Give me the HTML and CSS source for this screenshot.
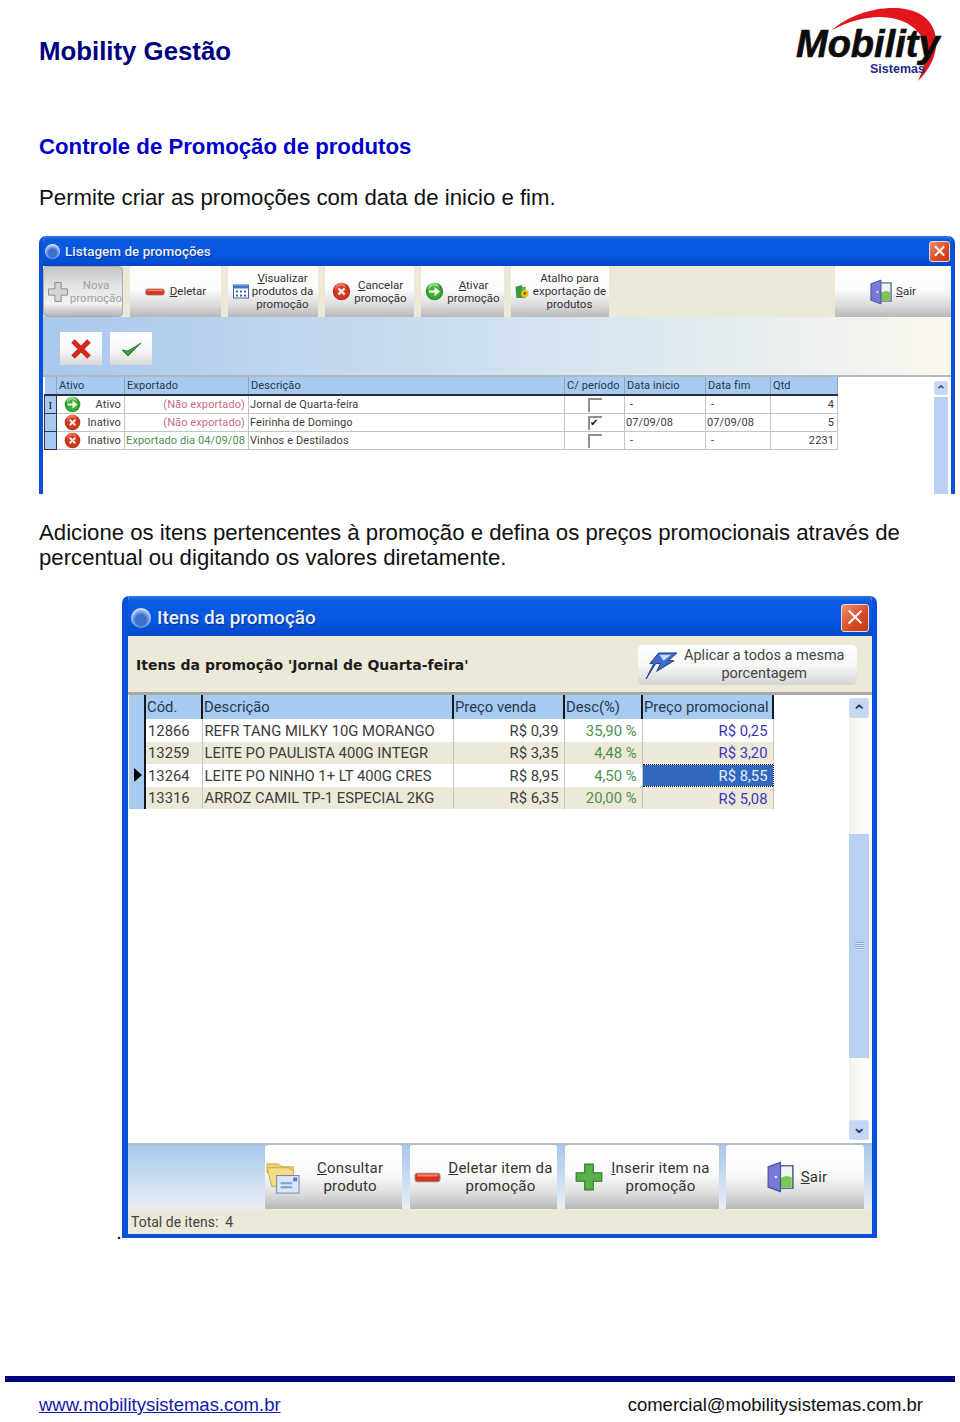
FILE: index.html
```html
<!DOCTYPE html>
<html lang="pt-BR">
<head>
    <meta charset="UTF-8">
    <meta name="viewport" content="width=device-width, initial-scale=1.0">
    <title>Mobility Gestão</title>
    <link rel="stylesheet" href="styles.css">
</head>
<body>
    <!-- ícones usados nas duas janelas -->
    <svg class="icon-defs" aria-hidden="true">
        <symbol id="i-cancel" viewBox="0 0 24 24">
            <circle cx="12" cy="12" r="11" fill="#c9301c"/>
            <circle cx="11" cy="8" r="7" fill="#e8735c"/>
            <circle cx="12" cy="13" r="8" fill="#cf3a22"/>
            <path d="M8 8l8 8M16 8l-8 8" stroke="#f6e4dc" stroke-width="3"/>
        </symbol>
        <symbol id="i-go" viewBox="0 0 24 24">
            <circle cx="12" cy="12" r="11" fill="#2f9a2c"/>
            <circle cx="11" cy="8" r="7" fill="#93dc84"/>
            <circle cx="12" cy="13" r="8" fill="#39ad36"/>
            <path d="M5 10.500h7V6l7 6-7 6v-4.500H5z" fill="#eef8e6"/>
        </symbol>
        <symbol id="i-door" viewBox="0 0 24 28">
            <path d="M10 4h13v20H10z" fill="#eef3f4" stroke="#5a6c94" stroke-width="1.500"/>
            <path d="M11 15l6-2 5 1v9H11z" fill="#78c850"/>
            <path d="M1 5l11-4v26L1 23z" fill="#7878d8" stroke="#4c4c9c"/>
            <circle cx="8" cy="14" r="1.200" fill="#e8e8ff"/>
        </symbol>
        <symbol id="i-plus" viewBox="0 0 28 28">
            <path d="M10 2h8v8h8v8h-8v8h-8v-8H2v-8h8z"/>
        </symbol>
        <symbol id="i-minus" viewBox="0 0 26 10">
            <rect x="1" y="1" width="24" height="8" rx="2.500" fill="#d8321c" stroke="#9c8078"/>
            <rect x="3" y="2" width="20" height="2" fill="#f08470"/>
        </symbol>
    </svg>

    <header class="top">
        <h1 class="brand-title">Mobility Gestão</h1>
        <svg class="logo" viewBox="0 0 150 80" role="img" aria-label="Mobility Sistemas">
            <path d="M40 27C62 7 104-2 128 11c21 12 23 42-2 67 11-24 10-41-4-53C102 8 68 12 40 27z" fill="#e2141c"/>
            <text class="logo-name" x="4" y="54">Mobility</text>
            <text class="logo-sub" x="78" y="70">Sistemas</text>
        </svg>
    </header>

    <main>
        <h2 class="section-title">Controle de Promoção de produtos</h2>
        <p class="intro">Permite criar as promoções com data de inicio e fim.</p>

        <!-- Listagem de promoções -->
        <section class="window window-list">
            <div class="titlebar">
                <span class="title-ball"></span>
                <span class="title-text">Listagem de promoções</span>
                <span class="close-btn"></span>
            </div>
            <div class="toolbar">
                <div class="tool tool-pressed w-nova">
                    <svg class="ic-20 ic-grey"><use href="#i-plus"/></svg>
                    <span class="tool-label">Nova<br>promoção</span>
                </div>
                <div class="tool w-del">
                    <svg class="ic-minus"><use href="#i-minus"/></svg>
                    <span class="tool-label"><u>D</u>eletar</span>
                </div>
                <div class="tool w-vis">
                    <svg class="ic-15" viewBox="0 0 16 14">
                        <rect x=".5" y=".5" width="15" height="13" fill="#fff" stroke="#3c64a8"/>
                        <path d="M1 1h14v3H1z" fill="#3c78c8"/>
                        <path d="M3 6h2v2H3zM7 6h2v2H7zM11 6h2v2h-2zM3 10h2v2H3zM7 10h2v2H7zM11 10h2v2h-2z" fill="#3c64a8"/>
                    </svg>
                    <span class="tool-label"><u>V</u>isualizar<br>produtos da<br>promoção</span>
                </div>
                <div class="tool w-can">
                    <svg class="ic-18"><use href="#i-cancel"/></svg>
                    <span class="tool-label"><u>C</u>ancelar<br>promoção</span>
                </div>
                <div class="tool w-ati">
                    <svg class="ic-18"><use href="#i-go"/></svg>
                    <span class="tool-label"><u>A</u>tivar<br>promoção</span>
                </div>
                <div class="tool w-ata">
                    <svg class="ic-15" viewBox="0 0 16 16">
                        <path d="M1 3l7-2 1 14-7 0z" fill="#3c9a40"/>
                        <path d="M8 3h4v12H8z" fill="#5cb84c"/>
                        <circle cx="11" cy="10" r="4" fill="#e8c020"/>
                        <circle cx="11" cy="10" r="1.500" fill="#805c10"/>
                    </svg>
                    <span class="tool-label">Atalho para<br>exportação de<br>produtos</span>
                </div>
                <div class="tool-space"></div>
                <div class="tool w-sair">
                    <svg class="ic-door"><use href="#i-door"/></svg>
                    <span class="tool-label"><u>S</u>air</span>
                </div>
            </div>
            <div class="filter-bar">
                <div class="square-btn">
                    <svg class="ic-22" viewBox="0 0 24 24"><path d="M4 4l16 16M20 4L4 20" stroke="#d42818" stroke-width="5"/></svg>
                </div>
                <div class="square-btn">
                    <svg class="ic-22" viewBox="0 0 24 24"><path d="M3 13l6 6L22 6 9 14z" fill="#3c9c48" stroke="#2c8038"/></svg>
                </div>
            </div>
            <div class="grid-area">
                <table class="grid grid-small">
                    <colgroup>
                        <col class="c-12"><col class="c-68"><col class="c-124"><col class="c-316">
                        <col class="c-60"><col class="c-81"><col class="c-65"><col class="c-67">
                    </colgroup>
                    <thead>
                        <tr><th></th><th>Ativo</th><th>Exportado</th><th>Descrição</th><th>C/ período</th><th>Data inicio</th><th>Data fim</th><th>Qtd</th></tr>
                    </thead>
                    <tbody>
                        <tr>
                            <td class="ind ind-cursor">I</td>
                            <td><span class="status"><svg class="ic-16"><use href="#i-go"/></svg><span>Ativo</span></span></td>
                            <td class="num txt-red">(Não exportado)</td>
                            <td>Jornal de Quarta-feira</td>
                            <td class="mid"><span class="check"></span></td>
                            <td class="pad-dash">-</td><td class="pad-dash">-</td>
                            <td class="num">4</td>
                        </tr>
                        <tr>
                            <td class="ind"></td>
                            <td><span class="status"><svg class="ic-16"><use href="#i-cancel"/></svg><span>Inativo</span></span></td>
                            <td class="num txt-red">(Não exportado)</td>
                            <td>Feirinha de Domingo</td>
                            <td class="mid"><span class="check checked">✔</span></td>
                            <td>07/09/08</td><td>07/09/08</td>
                            <td class="num">5</td>
                        </tr>
                        <tr>
                            <td class="ind"></td>
                            <td><span class="status"><svg class="ic-16"><use href="#i-cancel"/></svg><span>Inativo</span></span></td>
                            <td class="num txt-green">Exportado dia 04/09/08</td>
                            <td>Vinhos e Destilados</td>
                            <td class="mid"><span class="check"></span></td>
                            <td class="pad-dash">-</td><td class="pad-dash">-</td>
                            <td class="num">2231</td>
                        </tr>
                    </tbody>
                </table>
                <div class="scroll scroll-small">
                    <span class="scroll-btn">⌃</span>
                    <span class="scroll-thumb"></span>
                </div>
            </div>
        </section>

        <p class="intro intro-two">Adicione os itens pertencentes à promoção e defina os preços promocionais através de percentual ou digitando os valores diretamente.</p>

        <div class="window-row">
            <span class="dot">.</span>
            <!-- Itens da promoção -->
            <section class="window window-items">
                <div class="titlebar titlebar-big">
                    <span class="title-ball"></span>
                    <span class="title-text">Itens da promoção</span>
                    <span class="close-btn"></span>
                </div>
                <div class="items-head">
                    <strong class="items-title">Itens da promoção 'Jornal de Quarta-feira'</strong>
                    <div class="apply-btn">
                        <svg class="ic-bolt" viewBox="0 0 34 30">
                            <path d="M14 2h19l-9 8h6L12 21l4-8h-5L1 29 9 13H5z" fill="#3c6cc8" stroke="#1c3c80"/>
                            <path d="M15 4h12l-8 6" fill="#c8dcf8"/>
                        </svg>
                        <span>Aplicar a todos a mesma<br>porcentagem</span>
                    </div>
                </div>
                <div class="grid-area grid-area-big">
                    <table class="grid grid-big">
                        <colgroup>
                            <col class="c-16"><col class="c-57"><col class="c-251">
                            <col class="c-111"><col class="c-78"><col class="c-131">
                        </colgroup>
                        <thead>
                            <tr><th></th><th>Cód.</th><th>Descrição</th><th>Preço venda</th><th>Desc(%)</th><th>Preço promocional</th></tr>
                        </thead>
                        <tbody>
                            <tr>
                                <td class="ind"></td><td>12866</td><td>REFR TANG MILKY 10G MORANGO</td>
                                <td class="num">R$ 0,39</td><td class="num txt-green">35,90 %</td><td class="num txt-blue">R$ 0,25</td>
                            </tr>
                            <tr class="alt">
                                <td class="ind"></td><td>13259</td><td>LEITE PO PAULISTA 400G INTEGR</td>
                                <td class="num">R$ 3,35</td><td class="num txt-green">4,48 %</td><td class="num txt-blue">R$ 3,20</td>
                            </tr>
                            <tr>
                                <td class="ind"><span class="row-arrow"></span></td><td>13264</td><td>LEITE PO NINHO 1+ LT 400G CRES</td>
                                <td class="num">R$ 8,95</td><td class="num txt-green">4,50 %</td><td class="num cell-selected">R$ 8,55</td>
                            </tr>
                            <tr class="alt">
                                <td class="ind"></td><td>13316</td><td>ARROZ CAMIL TP-1 ESPECIAL 2KG</td>
                                <td class="num">R$ 6,35</td><td class="num txt-green">20,00 %</td><td class="num txt-blue">R$ 5,08</td>
                            </tr>
                        </tbody>
                    </table>
                    <div class="scroll scroll-big">
                        <span class="scroll-btn">⌃</span>
                        <span class="scroll-track"></span>
                        <span class="scroll-thumb"><span class="scroll-grip"></span></span>
                        <span class="scroll-track scroll-track-low"></span>
                        <span class="scroll-btn scroll-btn-down">⌄</span>
                    </div>
                </div>
                <div class="bottom-bar">
                    <div class="tool tool-big w-con">
                        <svg class="ic-folder" viewBox="0 0 36 36">
                            <path d="M1 4h12l3 3h12v6H1z" fill="#f0d070" stroke="#c8a840"/>
                            <path d="M1 8h22l6 4-4 15H6z" fill="#f8dc88" stroke="#c8a840"/>
                            <rect x="11" y="16" width="23" height="18" fill="#dce8f8" stroke="#6c84b0"/>
                            <path d="M15 24h12M15 28h12" stroke="#78a0d0" stroke-width="2"/>
                            <rect x="28" y="18" width="4" height="4" fill="#5878b8"/>
                        </svg>
                        <span class="tool-label"><u>C</u>onsultar<br>produto</span>
                    </div>
                    <div class="tool tool-big w-dit">
                        <svg class="ic-minus-big"><use href="#i-minus"/></svg>
                        <span class="tool-label"><u>D</u>eletar item da<br>promoção</span>
                    </div>
                    <div class="tool tool-big w-ins">
                        <svg class="ic-plus-big"><use href="#i-plus"/></svg>
                        <span class="tool-label"><u>I</u>nserir item na<br>promoção</span>
                    </div>
                    <div class="tool tool-big w-sai">
                        <svg class="ic-door-big"><use href="#i-door"/></svg>
                        <span class="tool-label"><u>S</u>air</span>
                    </div>
                </div>
                <div class="status-bar">Total de itens:&nbsp; 4</div>
            </section>
        </div>
    </main>

    <footer class="footer">
        <a class="footer-link" href="#">www.mobilitysistemas.com.br</a>
        <span>comercial@mobilitysistemas.com.br</span>
    </footer>
</body>
</html>
```

FILE: styles.css
```css
* {
    margin: 0;
    padding: 0;
    box-sizing: border-box;
}

body {
    background-color: #fff;
    color: #111;
    font-family: 'Liberation Sans', Arial, sans-serif;
    overflow-x: hidden;
}

.icon-defs {
    position: absolute;
    width: 0;
    height: 0;
}

/* cabeçalho */
.top {
    display: flex;
    justify-content: space-between;
    height: 134px;
    padding: 3px 18px 0 39px;
}

.brand-title {
    margin-top: 33px;
    color: #000080;
    font-size: 25.8px;
    line-height: 30px;
}

.logo {
    width: 150px;
    height: 80px;
}

.logo-name {
    font: italic bold 38px 'Liberation Sans', Arial, sans-serif;
    fill: #0c0c0c;
    stroke: #0c0c0c;
    stroke-width: .6px;
}

.logo-sub {
    font: bold 12.5px 'Liberation Sans', Arial, sans-serif;
    fill: #1c2c88;
}

.section-title {
    padding-left: 39px;
    color: #0000cc;
    font-size: 22.2px;
    line-height: 26px;
}

.intro {
    margin: 25px 0;
    padding-left: 39px;
    font-size: 22.2px;
    line-height: 26px;
}

.intro-two {
    margin: 26px 0;
    padding-right: 50px;
    line-height: 25px;
}

/* janelas */
.window {
    display: flex;
    flex-direction: column;
    background-color: #fff;
    border: solid #0a50d8;
    border-radius: 7px 7px 0 0;
    overflow: hidden;
}

.window-list {
    width: 916px;
    height: 258px;
    margin-left: 39px;
    border-width: 0 4px;
}

.window-row {
    display: flex;
    align-items: flex-end;
    padding-left: 116px;
}

.dot {
    width: 6px;
    margin-bottom: -4px;
    font-size: 21px;
    line-height: 20px;
}

.window-items {
    width: 755px;
    height: 642px;
    border-width: 0 5px 4px 6px;
}

.titlebar {
    display: flex;
    align-items: center;
    flex: none;
    height: 30px;
    margin: 0 -4px;
    padding: 0 5px 0 6px;
    background: linear-gradient(#2a7ce0, #0a5ae0 12%, #0658e4 60%, #0448c8);
}

.title-ball {
    flex: none;
    width: 15px;
    height: 15px;
    margin-right: 5px;
    border-radius: 50%;
    background: radial-gradient(circle at 50% 60%, #3c70d0 35%, #e0ecfa 75%);
}

.title-text {
    flex: 1;
    color: #e8f0fc;
    font-family: Roboto, sans-serif;
    font-size: 13.5px;
    font-weight: 500;
    text-shadow: 1px 1px 1px #0a3490;
}

.close-btn {
    position: relative;
    flex: none;
    width: 21px;
    height: 21px;
    border: 1px solid #e8d8d0;
    border-radius: 3px;
    background: linear-gradient(135deg, #ec9070, #d84820 60%, #c03c18);
}

.close-btn::before,
.close-btn::after {
    content: "";
    position: absolute;
    top: 44%;
    left: 15%;
    width: 70%;
    height: 2px;
    background-color: #fff;
    transform: rotate(45deg);
}

.close-btn::after {
    transform: rotate(-45deg);
}

/* barra de ferramentas */
.toolbar {
    display: flex;
    flex: none;
    gap: 7px;
    height: 51px;
    background-color: #ece9d8;
}

.tool {
    display: flex;
    align-items: center;
    justify-content: center;
    flex: none;
    gap: 3px;
    border-radius: 3px 3px 0 0;
    background: linear-gradient(#fff, #fbfbfb 45%, #dedede 75%, #b8b8b8);
}

.tool-label {
    color: #333;
    font-family: Roboto, sans-serif;
    font-size: 11.5px;
    line-height: 13px;
    text-align: center;
}

.tool-pressed {
    gap: 1px;
    padding-left: 3px;
    border: 1px solid #aaa;
    border-radius: 4px;
    background: linear-gradient(#c4c4c4, #e4e4e4 40%, #f2f2f2 75%, #b4b4b4);
}

.tool-pressed .tool-label {
    color: #a0a0a0;
}

.tool-space {
    flex: 1;
}

.w-nova { width: 80px; }
.w-del { width: 91px; }
.w-vis { width: 90px; }
.w-can { width: 89px; }
.w-ati { width: 83px; }
.w-ata { width: 98px; }
.w-sair { width: 116px; gap: 4px; }

.ic-20 { flex: none; width: 22px; height: 22px; }
.ic-grey { fill: #d4d4d4; stroke: #777; }
.ic-minus { width: 20px; height: 8px; margin-right: 2px; }
.ic-15 { width: 16px; height: 15px; }
.ic-18 { width: 19px; height: 19px; }
.ic-16 { width: 17px; height: 17px; flex: none; }
.ic-door { width: 22px; height: 26px; }
.ic-22 { width: 24px; height: 24px; }

.filter-bar {
    display: flex;
    flex: none;
    gap: 8px;
    height: 60px;
    padding: 15px 17px 0;
    border-bottom: 2px solid #b4b8bc;
    background: linear-gradient(90deg, #a8c8ec, #c8dcf0 40%, #e0eaf0 70%, #fbf7ee);
}

.square-btn {
    display: flex;
    align-items: center;
    justify-content: center;
    width: 42px;
    height: 33px;
    background: linear-gradient(#fff, #f8f8f8 55%, #d8d8d8);
}

/* grades */
.grid-area {
    display: flex;
    flex: 1;
    min-height: 0;
    padding-left: 1px;
}

.grid {
    align-self: flex-start;
    flex: none;
    border-collapse: collapse;
    table-layout: fixed;
    color: #3c3c3c;
    font-family: Roboto, sans-serif;
}

.grid th {
    border-right: 1px solid #8ca4c0;
    border-left: 1px solid #101820;
    background-color: #a6caf0;
    color: #28384c;
    font-weight: 400;
    text-align: left;
    white-space: nowrap;
}

.grid th:first-child {
    border-left: 0;
}

.grid td {
    border: 1px solid #c4c4c4;
    white-space: nowrap;
    overflow: hidden;
}

.c-12 { width: 12px; }
.c-16 { width: 16px; }
.c-57 { width: 57px; }
.c-60 { width: 60px; }
.c-65 { width: 65px; }
.c-67 { width: 67px; }
.c-68 { width: 68px; }
.c-78 { width: 78px; }
.c-81 { width: 81px; }
.c-111 { width: 111px; }
.c-124 { width: 124px; }
.c-131 { width: 131px; }
.c-251 { width: 251px; }
.c-316 { width: 316px; }

.grid .ind {
    padding: 0;
    background-color: #a6caf0;
    border-color: #28384c;
    color: #111;
    text-align: center;
}

.ind-cursor {
    font-family: 'Liberation Serif', serif;
}

.grid .num { text-align: right; }
.grid .mid { padding: 0; text-align: center; }
.txt-red { color: #c86c80; }
.txt-green { color: #4c9050; }
.txt-blue { color: #3c34c0; }

.grid-small {
    width: 793px;
    font-size: 11px;
    letter-spacing: .1px;
}

.grid-small th {
    height: 18px;
    padding: 0 2px;
    border-bottom: 2px solid #28303c;
}

.grid-small td {
    height: 18px;
    padding: 0 3px 0 1px;
}

.grid-small .pad-dash {
    padding-left: 5px;
}

.status {
    display: flex;
    align-items: center;
    justify-content: space-between;
    padding-left: 6px;
}

.check {
    display: inline-block;
    width: 14px;
    height: 14px;
    border-top: 2px solid #909090;
    border-left: 2px solid #909090;
    vertical-align: middle;
}

.checked {
    color: #111;
    font-size: 10px;
    line-height: 10px;
    text-align: left;
}

.scroll {
    display: flex;
    flex-direction: column;
    flex: none;
    margin-left: auto;
}

.scroll-small {
    width: 14px;
    margin-right: 3px;
    padding-top: 4px;
}

.scroll-btn {
    display: block;
    flex: none;
    height: 14px;
    border: 1px solid #d0dcf0;
    border-radius: 2px;
    background-color: #c4d8f4;
    color: #28406c;
    font: bold 13px/18px 'DejaVu Sans', sans-serif;
    text-align: center;
}

.scroll-thumb {
    display: flex;
    align-items: center;
    justify-content: center;
    flex: 1;
    margin-top: 2px;
    background-color: #b8d0f4;
}

.grid-big {
    width: 644px;
    font-size: 14.8px;
}

.grid-big th {
    height: 24px;
    padding: 0 1px;
    border-left-width: 2px;
}

.grid-big th:last-child {
    border-right: 2px solid #101820;
}

.grid-big td {
    height: 22.5px;
    padding: 1px 5px 0 2px;
    border-width: 0 1px;
}

.grid-big .alt td:not(.ind) {
    background-color: #ece9d8;
}

.grid-big .ind {
    border-width: 0 2px 0 0;
    border-color: #101820;
    text-align: left;
}

.row-arrow {
    display: block;
    width: 0;
    margin-left: 5px;
    border-top: 7px solid transparent;
    border-bottom: 7px solid transparent;
    border-left: 8px solid #000;
}

.grid-big .cell-selected {
    border: 1px dotted #101010;
    background-color: #3068c0;
    color: #e8f0ff;
}

.items-head {
    display: flex;
    align-items: center;
    justify-content: space-between;
    flex: none;
    height: 56px;
    padding: 2px 15px 0 8px;
    background-color: #ece9d8;
}

.titlebar-big {
    height: 40px;
    margin: 0 -5px 0 -6px;
    padding: 3px 8px 0 9px;
}

.titlebar-big .title-ball {
    width: 20px;
    height: 20px;
    margin-right: 6px;
}

.titlebar-big .title-text {
    font-size: 19px;
}

.titlebar-big .close-btn {
    width: 28px;
    height: 28px;
}

.items-title {
    color: #1c1c1c;
    font-family: 'DejaVu Sans', sans-serif;
    font-size: 14px;
}

.apply-btn {
    display: flex;
    align-items: center;
    gap: 6px;
    width: 219px;
    height: 40px;
    padding-left: 7px;
    border-radius: 5px;
    background: linear-gradient(#fff, #f8f8f8 50%, #d4d4d4);
    color: #444;
    font-family: Roboto, sans-serif;
    font-size: 14.5px;
    line-height: 18px;
    text-align: center;
}

.ic-bolt {
    flex: none;
    width: 33px;
    height: 29px;
}

.grid-area-big {
    flex: none;
    height: 453px;
    padding-left: 1px;
    border-top: 3px solid #a8a8a8;
    border-bottom: 2px solid #b0bcc8;
}

.scroll-big {
    width: 20px;
    margin-right: 3px;
    padding: 3px 0 4px;
}

.scroll-big .scroll-btn {
    height: 20px;
    font-size: 17px;
    line-height: 24px;
}

.scroll-big .scroll-btn-down {
    line-height: 12px;
}

.scroll-track {
    flex: none;
    height: 116px;
    background: linear-gradient(90deg, #f4f4ec, #fff);
}

.scroll-track-low {
    height: 62px;
}

.scroll-big .scroll-thumb {
    flex: none;
    height: 224px;
    margin: 0;
}

.scroll-grip {
    width: 9px;
    height: 8px;
    background: repeating-linear-gradient(#8ca8d8 0 1px, #d8e4f8 1px 2px);
}

.bottom-bar {
    display: flex;
    flex: none;
    gap: 8px;
    height: 64px;
    padding-left: 137px;
    background: linear-gradient(#a8c8ec, #e8eef5);
}

.tool-big {
    gap: 7px;
}

.tool-big .tool-label {
    font-size: 15px;
    letter-spacing: .2px;
    line-height: 18px;
}

.w-con { width: 137px; gap: 16px; justify-content: flex-start; padding-left: 1px; }
.w-dit { width: 147px; }
.w-ins { width: 154px; }
.w-sai { width: 138px; margin-left: -1px; padding-left: 4px; }

.ic-folder { flex: none; width: 35px; height: 35px; }
.ic-minus-big { width: 27px; height: 11px; }
.ic-plus-big { width: 30px; height: 30px; fill: #58b048; stroke: #287828; }
.ic-door-big { width: 27px; height: 34px; }

.status-bar {
    flex: 1;
    padding-left: 3px;
    background-color: #ece9d8;
    color: #444;
    font-family: Roboto, sans-serif;
    font-size: 14px;
    line-height: 27px;
}

/* rodapé */
.footer {
    display: flex;
    justify-content: space-between;
    margin: 138px 5px 0;
    padding: 10px 32px 0 34px;
    border-top: 6px solid #000080;
    font-size: 18.5px;
    line-height: 26px;
}

.footer-link {
    color: #1818a8;
}
```
